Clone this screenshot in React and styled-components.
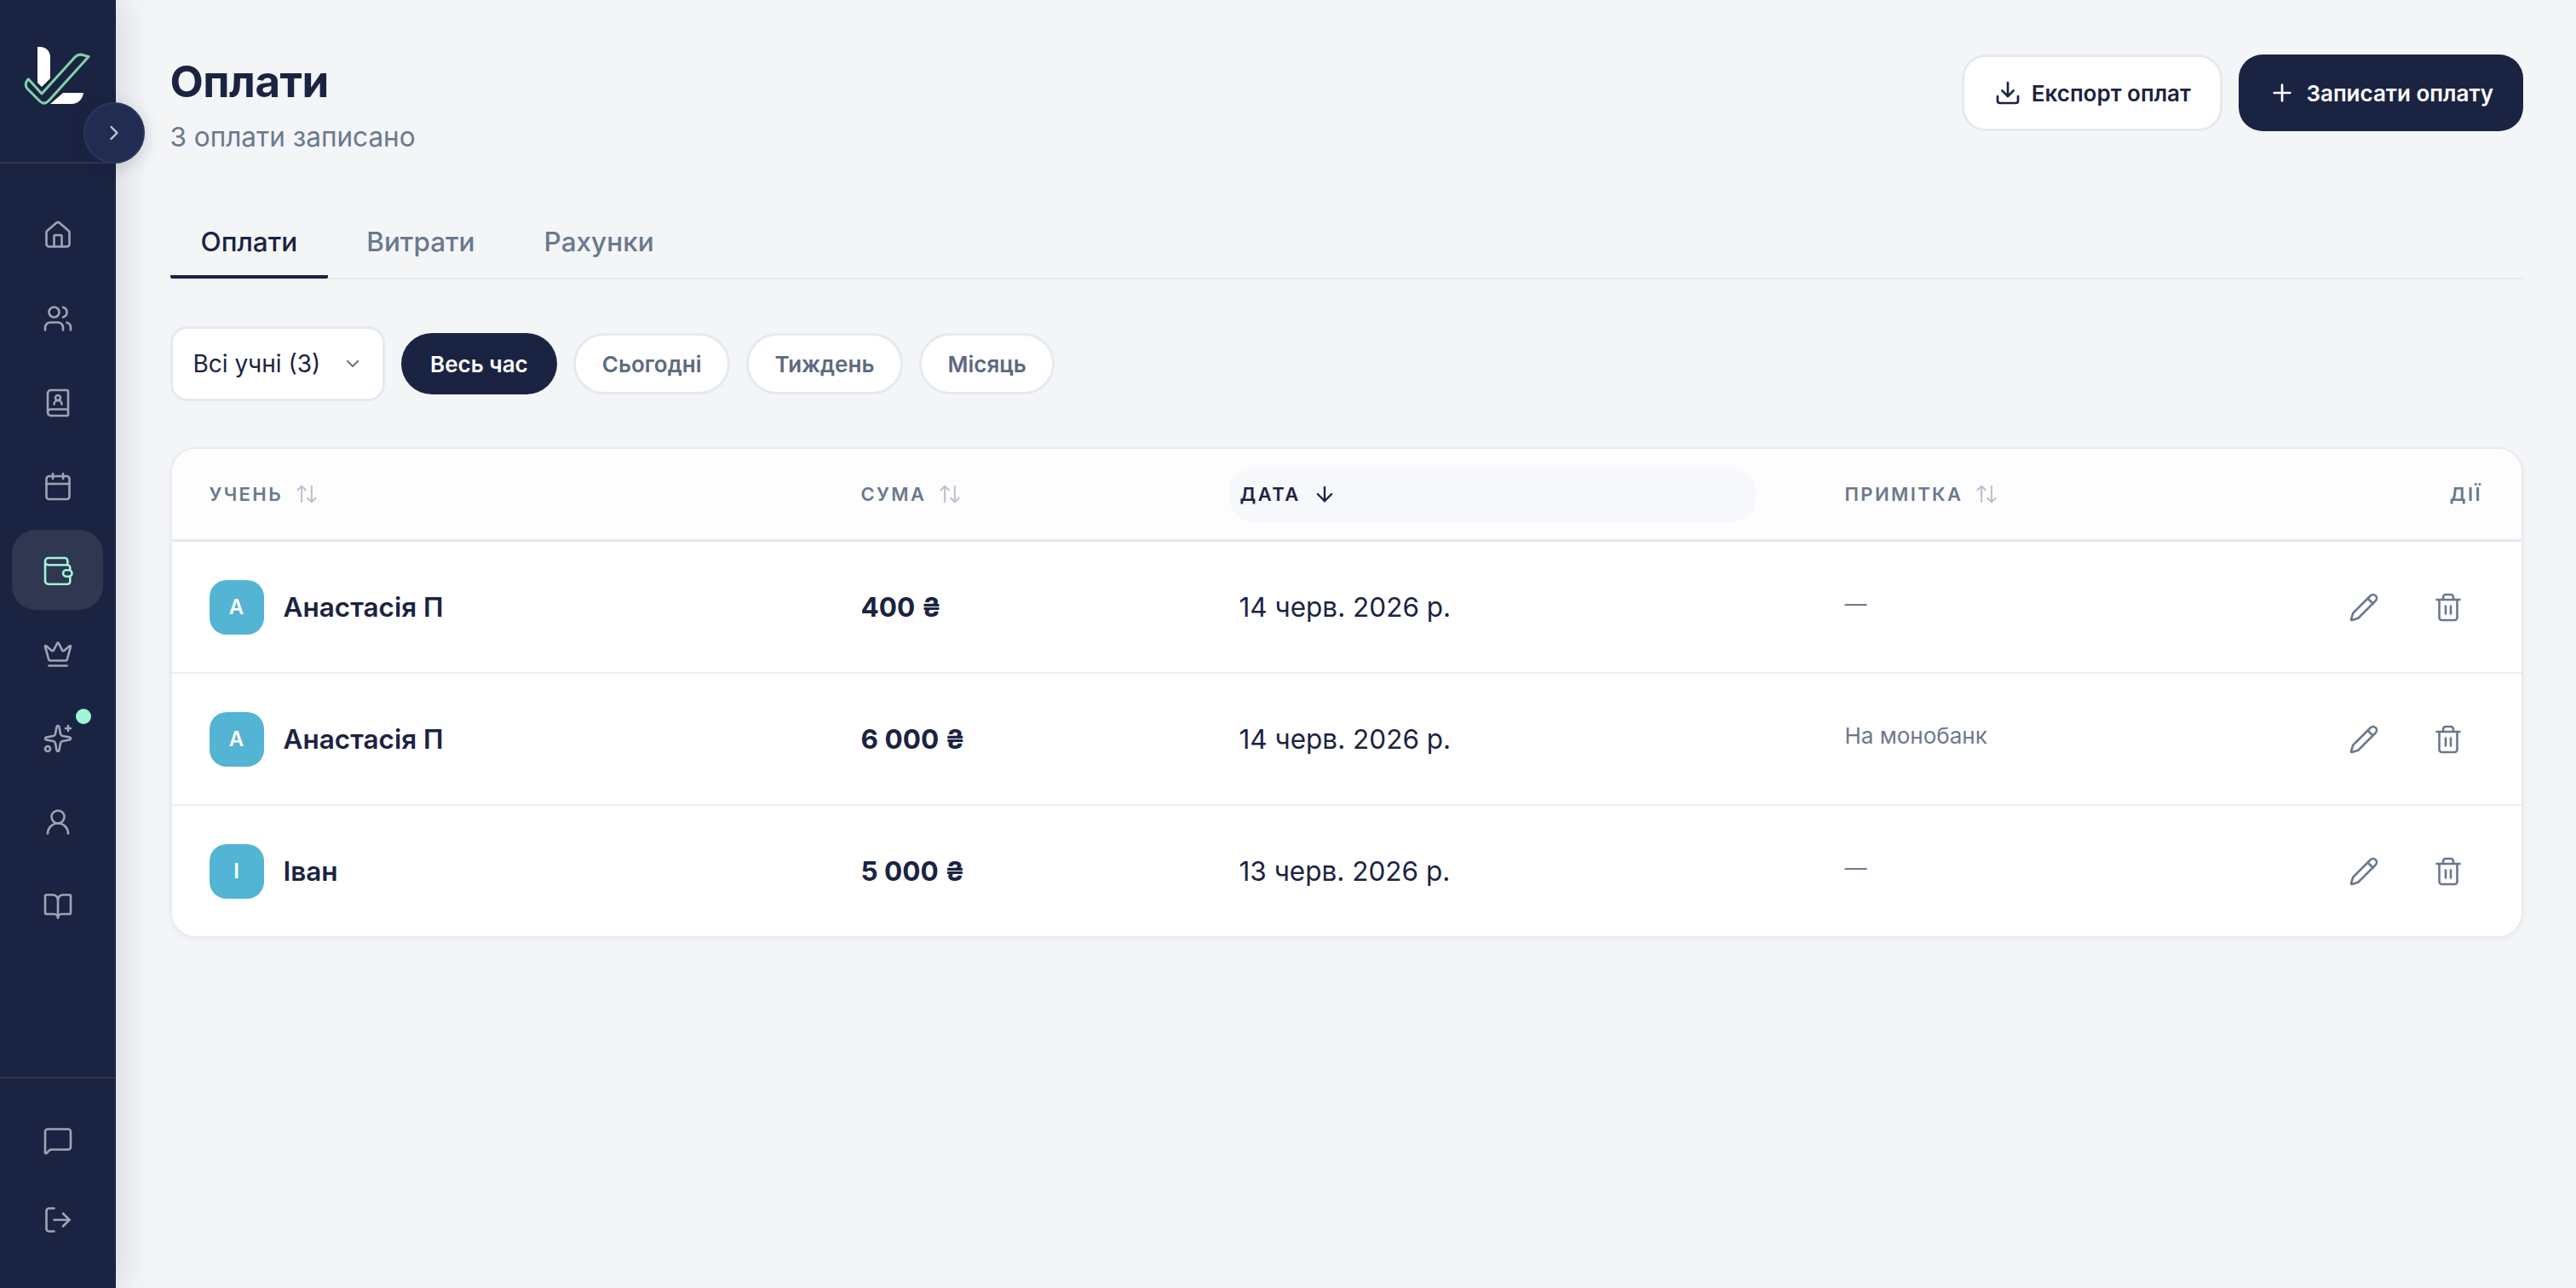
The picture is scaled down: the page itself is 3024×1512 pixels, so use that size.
import React from 'react'
import styled, { createGlobalStyle } from 'styled-components'
import {
  House, Users, BookUser, Calendar, Crown, Sparkles, UserRound, BookOpen,
  MessageSquare, LogOut, ChevronRight, ChevronDown, Download, Plus,
  ArrowUpDown, ArrowDown, Pencil, Trash2,
} from 'lucide-react'

const navy = '#1b2342'
const slate = '#6b788e'
const line = '#e5e9f0'
const mint = '#9ff5d5'

const GlobalStyle = createGlobalStyle`
  html, body { margin: 0; padding: 0; background: #f3f5f7; }
  body { font-family: Inter, "Noto Sans", sans-serif; color: ${navy}; }
  * { box-sizing: border-box; }
  button { font-family: inherit; }
`

const Layout = styled.div`
  display: flex;
  min-height: 100vh;
`

const Sidebar = styled.aside`
  position: relative;
  z-index: 2;
  flex: 0 0 136px;
  height: 1512px;
  display: flex;
  flex-direction: column;
  background: ${navy};
  box-shadow: 4px 0 40px rgba(30, 40, 70, 0.15);
`

const Brand = styled.div`
  height: 192px;
  flex: none;
  padding: 54px 0 0 27px;
  border-bottom: 2px solid rgba(255, 255, 255, 0.09);
  svg { display: block; }
`

const CollapseButton = styled.button`
  position: absolute;
  top: 120px;
  left: 98px;
  width: 72px;
  height: 72px;
  padding: 0;
  display: flex;
  align-items: center;
  justify-content: center;
  border-radius: 50%;
  border: 2px solid #2b3659;
  background: #212c52;
  color: #c3c9d8;
  box-shadow: 0 4px 20px rgba(20, 30, 60, 0.18);
`

const Nav = styled.nav`
  flex: 1;
  display: flex;
  flex-direction: column;
  gap: 4.5px;
  padding: 36px 15px 0 14px;
`

const NavItem = styled.a`
  position: relative;
  height: 94px;
  flex: none;
  display: flex;
  align-items: center;
  justify-content: center;
  border-radius: 28px;
  padding-top: 1px;
  color: ${p => (p.$active ? mint : '#9ea4b4')};
  background: ${p => (p.$active ? '#2f3751' : 'transparent')};
`

const Dot = styled.span`
  position: absolute;
  top: 13px;
  left: 75px;
  width: 18px;
  height: 18px;
  border-radius: 50%;
  background: ${mint};
`

const SideFooter = styled.div`
  flex: none;
  display: flex;
  flex-direction: column;
  padding: 26px 15px 34px 14px;
  border-top: 2px solid rgba(255, 255, 255, 0.09);
`

const FootItem = styled(NavItem)`
  height: 93px;
`

const Main = styled.main`
  flex: 1;
  min-width: 0;
  padding: 64px 62px 0 63.5px;
`

const PageHeader = styled.header`
  display: flex;
  justify-content: space-between;
  align-items: flex-start;
`

const Title = styled.h1`
  margin: 0;
  font-size: 51px;
  line-height: 64px;
  font-weight: 700;
  letter-spacing: -0.5px;
  color: ${navy};
`

const Subtitle = styled.p`
  margin: 13px 0 0;
  font-size: 31.5px;
  line-height: 40px;
  color: ${slate};
`

const Actions = styled.div`
  display: flex;
  gap: 19px;
`

const HeadButton = styled.button`
  height: 90px;
  display: flex;
  align-items: center;
  gap: 12px;
  padding: 0 ${p => (p.$primary ? '35px' : '34.5px')};
  border-radius: 28px;
  border: ${p => (p.$primary ? 'none' : `3px solid ${line}`)};
  background: ${p => (p.$primary ? navy : '#fff')};
  color: ${p => (p.$primary ? '#fff' : navy)};
  font-size: 26px;
  font-weight: 600;
`

const Tabs = styled.div`
  display: flex;
  gap: 9px;
  margin-top: 59px;
  border-bottom: 2px solid ${line};
`

const Tab = styled.a`
  height: 87px;
  margin-bottom: -1px;
  display: flex;
  align-items: center;
  padding: 3px 36px 0;
  font-size: 31.5px;
  font-weight: 500;
  color: ${p => (p.$active ? navy : slate)};
  border-bottom: 4px solid ${p => (p.$active ? navy : 'transparent')};
  border-radius: 0 0 2px 2px;
`

const Filters = styled.div`
  display: flex;
  align-items: center;
  gap: 19px;
  margin-top: 55px;
`

const StudentSelect = styled.div`
  width: 252px;
  height: 88px;
  display: flex;
  align-items: center;
  justify-content: space-between;
  padding: 0 23px 0 24px;
  border: 3px solid ${line};
  border-radius: 20px;
  background: #fff;
  font-size: 28px;
  color: ${navy};
  svg { color: ${slate}; }
`

const Pill = styled.button`
  height: 72px;
  padding: 0 ${p => (p.$active ? '34.5px' : '30.5px')};
  border-radius: 36px;
  border: ${p => (p.$active ? 'none' : `3px solid ${line}`)};
  background: ${p => (p.$active ? navy : '#fff')};
  color: ${p => (p.$active ? '#fff' : '#5d6a80')};
  font-size: 26px;
  font-weight: 600;
`

const Card = styled.section`
  margin-top: 54px;
  background: #fff;
  border: 2px solid #e8ebf1;
  border-radius: 30px;
  overflow: hidden;
  box-shadow: 0 2px 6px rgba(30, 40, 70, 0.05);
`

const Row = styled.div`
  display: grid;
  grid-template-columns: 765px 446px 709px 1fr;
  align-items: center;
  padding: 0 48px 0 44px;
  height: 155px;
  border-bottom: 2px solid #eceef4;
  &:last-child { height: 153px; border-bottom: none; }
`

const HeadRow = styled(Row)`
  height: 109px;
  background: #fdfdfe;
  border-bottom: 3px solid ${line};
`

const HeadCell = styled.div`
  display: flex;
  align-items: center;
  gap: 14px;
  font-size: 22px;
  font-weight: 600;
  letter-spacing: 2.4px;
  color: ${p => (p.$active ? navy : slate)};
  svg { color: ${p => (p.$active ? navy : '#b9c1ce')}; }
`

const ActiveHead = styled(HeadCell)`
  width: 618px;
  height: 63px;
  margin-left: -14px;
  padding-left: 13px;
  border-radius: 28px;
  background: #f7f8fc;
`

const RightHead = styled(HeadCell)`
  justify-content: flex-end;
  margin-right: -2px;
`

const Student = styled.div`
  display: flex;
  align-items: center;
  gap: 23px;
  font-size: 31.5px;
  font-weight: 600;
`

const Avatar = styled.span`
  width: 64px;
  height: 64px;
  display: flex;
  align-items: center;
  justify-content: center;
  border-radius: 20px;
  background: #53b4d3;
  color: #fff;
  font-size: 24px;
  font-weight: 600;
`

const Amount = styled.div`
  font-size: 31.5px;
  font-weight: 700;
`

const DateText = styled.div`
  font-size: 31.5px;
  margin-left: -2px;
`

const NoteCell = styled.div`
  display: flex;
  align-items: center;
  justify-content: space-between;
`

const Note = styled.span`
  font-size: 26px;
  color: ${slate};
  margin-bottom: 9px;
`

const RowActions = styled.div`
  display: flex;
  gap: 23px;
`

const IconButton = styled.button`
  width: 76px;
  height: 72px;
  padding: 0;
  display: flex;
  align-items: center;
  justify-content: center;
  border: none;
  background: transparent;
  color: ${slate};
`

const Logo = () => (
  <svg width="80" height="70" viewBox="27 54 80 70">
    <path
      fill="#fff"
      d="M44 55h3c7 0 12 5 12 12v25l-10 10-5-5zM59 122l15-13h24c-1 7-6 13-14 13z"
    />
    <path
      fill={navy}
      stroke="#7fd3a6"
      strokeWidth="3"
      strokeLinejoin="round"
      d="M33.5 93 49 110 88 67q3-3 7-3l9 2.5-47 52q-5 5-10 .5l-15-15q-4-5 1-11z"
    />
  </svg>
)

const WalletIcon = () => (
  <svg width="36" height="36" viewBox="0 0 24 24" fill="none" stroke="currentColor" strokeWidth="1.75" strokeLinecap="round" strokeLinejoin="round">
    <path d="M19.5 7.5V4a2 2 0 0 0-2-2H4.5A2.5 2.5 0 0 0 2 4.5V20a2.5 2.5 0 0 0 2.5 2.5h15a2 2 0 0 0 2-2v-11a2 2 0 0 0-2-2H4.5A2.5 2.5 0 0 1 2 5" />
    <rect x="16" y="11.5" width="7" height="5" rx="2.5" fill="#2f3751" />
  </svg>
)

const navIcons = { size: 36, strokeWidth: 1.75 }

const payments = [
  { id: 1, letter: 'А', name: 'Анастасія П', amount: '400 ₴', date: '14 черв. 2026 р.', note: '—' },
  { id: 2, letter: 'А', name: 'Анастасія П', amount: '6 000 ₴', date: '14 черв. 2026 р.', note: 'На монобанк' },
  { id: 3, letter: 'І', name: 'Іван', amount: '5 000 ₴', date: '13 черв. 2026 р.', note: '—' },
]

export default function App() {
  return (
    <Layout>
      <GlobalStyle />
      <Sidebar>
        <Brand><Logo /></Brand>
        <CollapseButton><ChevronRight size={28} strokeWidth={2} /></CollapseButton>
        <Nav>
          <NavItem><House {...navIcons} /></NavItem>
          <NavItem><Users {...navIcons} /></NavItem>
          <NavItem><BookUser {...navIcons} /></NavItem>
          <NavItem><Calendar {...navIcons} /></NavItem>
          <NavItem $active><WalletIcon /></NavItem>
          <NavItem><Crown {...navIcons} /></NavItem>
          <NavItem><Sparkles {...navIcons} /><Dot /></NavItem>
          <NavItem><UserRound {...navIcons} /></NavItem>
          <NavItem><BookOpen {...navIcons} /></NavItem>
        </Nav>
        <SideFooter>
          <FootItem><MessageSquare {...navIcons} /></FootItem>
          <FootItem><LogOut {...navIcons} /></FootItem>
        </SideFooter>
      </Sidebar>
      <Main>
        <PageHeader>
          <div>
            <Title>Оплати</Title>
            <Subtitle>3 оплати записано</Subtitle>
          </div>
          <Actions>
            <HeadButton><Download size={32} strokeWidth={2} />Експорт оплат</HeadButton>
            <HeadButton $primary><Plus size={32} strokeWidth={2} />Записати оплату</HeadButton>
          </Actions>
        </PageHeader>
        <Tabs>
          <Tab $active>Оплати</Tab>
          <Tab>Витрати</Tab>
          <Tab>Рахунки</Tab>
        </Tabs>
        <Filters>
          <StudentSelect>Всі учні (3)<ChevronDown size={24} strokeWidth={2.2} /></StudentSelect>
          <Pill $active>Весь час</Pill>
          <Pill>Сьогодні</Pill>
          <Pill>Тиждень</Pill>
          <Pill>Місяць</Pill>
        </Filters>
        <Card>
          <HeadRow>
            <HeadCell>УЧЕНЬ<ArrowUpDown size={28} strokeWidth={1.75} /></HeadCell>
            <HeadCell>СУМА<ArrowUpDown size={28} strokeWidth={1.75} /></HeadCell>
            <ActiveHead $active>ДАТА<ArrowDown size={28} strokeWidth={2} /></ActiveHead>
            <NoteCell>
              <HeadCell>ПРИМІТКА<ArrowUpDown size={28} strokeWidth={1.75} /></HeadCell>
              <RightHead>ДІЇ</RightHead>
            </NoteCell>
          </HeadRow>
          {payments.map(p => (
            <Row key={p.id}>
              <Student><Avatar>{p.letter}</Avatar>{p.name}</Student>
              <Amount>{p.amount}</Amount>
              <DateText>{p.date}</DateText>
              <NoteCell>
                <Note>{p.note}</Note>
                <RowActions>
                  <IconButton><Pencil size={36} strokeWidth={1.75} /></IconButton>
                  <IconButton><Trash2 size={36} strokeWidth={1.75} /></IconButton>
                </RowActions>
              </NoteCell>
            </Row>
          ))}
        </Card>
      </Main>
    </Layout>
  )
}
